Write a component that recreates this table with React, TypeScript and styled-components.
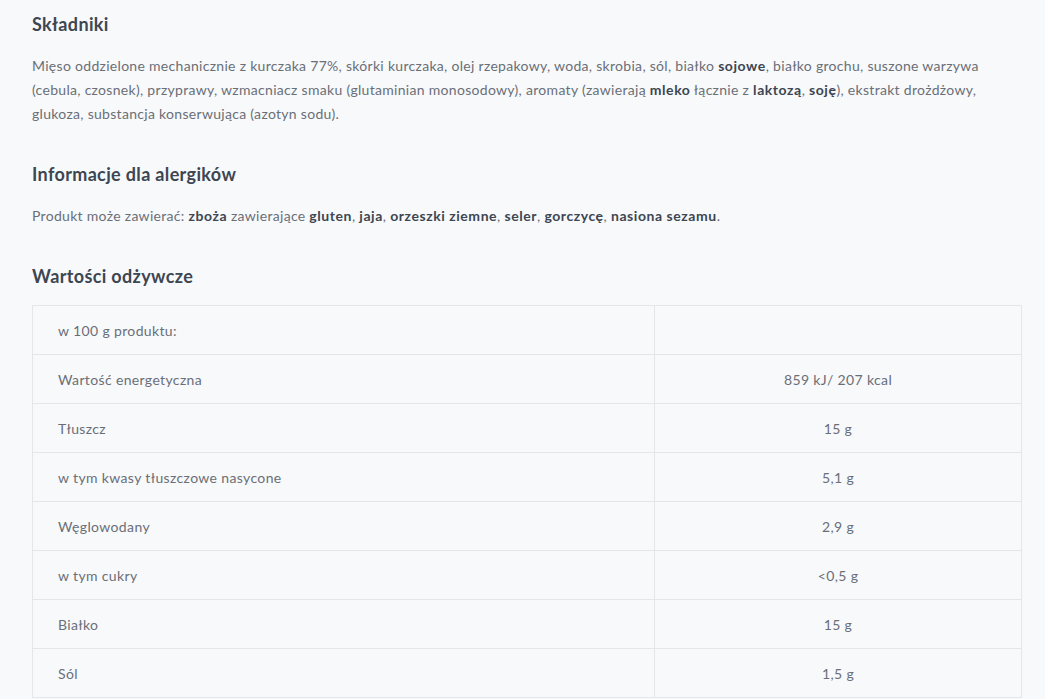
import React from "react";
import styled, { createGlobalStyle } from "styled-components";

const Global = createGlobalStyle`
  html, body { margin: 0; padding: 0; background: #f8f9fb; }
  body { font-family: Lato, "Open Sans", sans-serif; }
`;

const Page = styled.div`
  padding: 12px 24px 0 32px;
  width: 989px;
`;

const Section = styled.section<{ $gap?: number }>`
  margin-bottom: ${(p) => p.$gap ?? 0}px;
`;

const Heading = styled.h2`
  margin: 0;
  font-size: 18px;
  line-height: 24px;
  font-weight: 700;
  color: #3d4651;
  letter-spacing: 0.35px;
`;

const Text = styled.p`
  margin: 18px 0 0;
  font-size: 14px;
  line-height: 24px;
  color: #6a6f77;
  letter-spacing: 0.3px;
  b {
    font-weight: 700;
    color: #3d4651;
    letter-spacing: 0.55px;
  }
`;

const Table = styled.table`
  margin-top: 17px;
  width: 990px;
  border-collapse: collapse;
  table-layout: fixed;
  font-size: 14px;
  color: #6a6f77;
  letter-spacing: 0.36px;
`;

const Row = styled.tr`
  height: 49px;
`;

const Label = styled.td`
  width: 596px;
  border: 1px solid #e3e6ea;
  padding: 0 0 0 25px;
  vertical-align: middle;
`;

const Value = styled.td`
  border: 1px solid #e3e6ea;
  text-align: center;
  vertical-align: middle;
  padding: 0;
`;

const rows: [string, string][] = [
  ["w 100 g produktu:", ""],
  ["Wartość energetyczna", "859 kJ/ 207 kcal"],
  ["Tłuszcz", "15 g"],
  ["w tym kwasy tłuszczowe nasycone", "5,1 g"],
  ["Węglowodany", "2,9 g"],
  ["w tym cukry", "<0,5 g"],
  ["Białko", "15 g"],
  ["Sól", "1,5 g"],
];

export default function App() {
  return (
    <>
      <Global />
      <Page>
        <Section $gap={36}>
          <Heading>Składniki</Heading>
          <Text>
            Mięso oddzielone mechanicznie z kurczaka 77%, skórki kurczaka, olej rzepakowy, woda, skrobia, sól, białko{" "}
            <b>sojowe</b>, białko grochu, suszone warzywa (cebula, czosnek), przyprawy, wzmacniacz smaku (glutaminian
            monosodowy), aromaty (zawierają <b>mleko</b> łącznie z <b>laktozą</b>, <b>soję</b>), ekstrakt drożdżowy,
            glukoza, substancja konserwująca (azotyn sodu).
          </Text>
        </Section>
        <Section $gap={36}>
          <Heading>Informacje dla alergików</Heading>
          <Text>
            Produkt może zawierać: <b>zboża</b> zawierające <b>gluten</b>, <b>jaja</b>, <b>orzeszki ziemne</b>,{" "}
            <b>seler</b>, <b>gorczycę</b>, <b>nasiona sezamu</b>.
          </Text>
        </Section>
        <Section>
          <Heading>Wartości odżywcze</Heading>
          <Table>
            <tbody>
              {rows.map(([l, v]) => (
                <Row key={l}>
                  <Label>{l}</Label>
                  <Value>{v}</Value>
                </Row>
              ))}
            </tbody>
          </Table>
        </Section>
      </Page>
    </>
  );
}
